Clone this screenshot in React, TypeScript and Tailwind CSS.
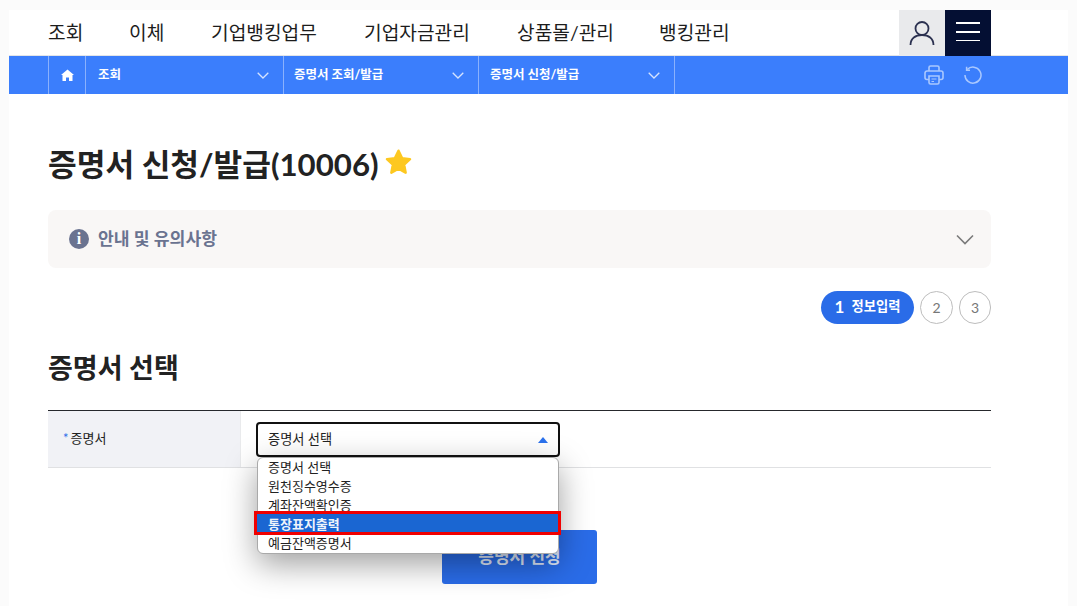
import React from "react";

const NAV = [
  { label: "조회", width: "w-[81px]" },
  { label: "이체", width: "w-[82px]" },
  { label: "기업뱅킹업무", width: "w-[153px]" },
  { label: "기업자금관리", width: "w-[153px]" },
  { label: "상품몰/관리", width: "w-[142px]" },
  { label: "뱅킹관리", width: "w-[100px]" },
];

const CRUMBS = [
  { label: "조회", width: "w-[198px] pl-[12px]" },
  { label: "증명서 조회/발급", width: "w-[195px] pl-[10px]" },
  { label: "증명서 신청/발급", width: "w-[196px] pl-[11px]" },
];
const OPTIONS = ["증명서 선택", "원천징수영수증", "계좌잔액확인증", "통장표지출력", "예금잔액증명서"];

const App: React.FC = () => {
  return (
    <div className="h-[606px] overflow-hidden bg-[#fbfbfb] pl-[9px] pr-[9px] pt-[10px] font-['Lato','Noto_Sans_CJK_KR',sans-serif] text-[#1f1f1f]">
      <div className="h-[596px] bg-white">
        {/* top menu */}
        <header className="flex h-[46px] items-center justify-between border-b border-[#e3e5e8] pl-[39px] pr-[77px]">
          <nav className="flex text-[19.2px] leading-[40px] text-[#1c1c1c]">
            {NAV.map((item) => (
              <a key={item.label} className={item.width}>
                {item.label}
              </a>
            ))}
          </nav>
          <div className="flex h-[46px]">
            <button className="flex w-[46px] items-center justify-center bg-[#e9eaec]">
              <svg width="26" height="26" viewBox="0 0 26 26" fill="none" stroke="#2b3150" strokeWidth="1.800">
                <circle cx="13" cy="8.500" r="6.500" />
                <path d="M1.500 25c0-6.500 5-10 11.500-10s11.500 3.500 11.500 10" />
              </svg>
            </button>
            <button className="flex w-[46px] flex-col items-center justify-center gap-[7px] bg-[#040f33] pb-[3px]">
              <span className="h-[2px] w-[24px] bg-white" />
              <span className="h-[2px] w-[24px] bg-white" />
              <span className="h-[1px] w-[24px] bg-white" />
            </button>
          </div>
        </header>

        {/* breadcrumb bar */}
        <div className="flex h-[38px] items-center justify-between bg-[#3b7efc] pl-[39px] pr-[86px]">
          <div className="flex h-full border-l border-[#8ab1fd]">
            <div className="flex w-[37px] items-center justify-center border-r border-[#8ab1fd]">
              <svg width="13" height="12" viewBox="0 0 13 12" fill="white">
                <path d="M6.500 0.500 13 6H11.500V12H8V8.500H5V12H1.500V6H0Z" />
              </svg>
            </div>
            {CRUMBS.map((crumb) => (
              <div
                key={crumb.label}
                className={`flex items-center justify-between border-r border-[#8ab1fd] pr-[14px] text-[12.500px] font-bold text-white ${crumb.width}`}
              >
                <span>{crumb.label}</span>
                <svg width="12" height="7" viewBox="0 0 12 7" fill="none" stroke="#d5e3fe" strokeWidth="1.300">
                  <path d="M0.700 0.700 6 6l5.300-5.300" />
                </svg>
              </div>
            ))}
          </div>
          <div className="flex items-center gap-[20px] text-[#aac8fe]">
            <svg width="20" height="20" viewBox="0 0 20 20" fill="none" stroke="currentColor" strokeWidth="1.600">
              <path d="M5 6V2.500C5 1.700 5.700 1 6.500 1h7c.8 0 1.500.7 1.500 1.500V6" />
              <path d="M5 14.500H3C1.900 14.500 1 13.600 1 12.500V8c0-1.100.9-2 2-2h14c1.100 0 2 .9 2 2v4.500c0 1.100-.9 2-2 2h-2" />
              <path d="M5 11h10v6.500c0 .8-.7 1.500-1.500 1.500h-7C5.700 19 5 18.300 5 17.500Z" />
              <path d="M7.500 14h5M7.500 16.500h2.500" strokeWidth="1.200" />
            </svg>
            <svg width="18" height="18" viewBox="0 0 18 18" fill="none" stroke="currentColor" strokeWidth="1.500">
              <path d="M3.200 3.600A8 8 0 1 1 1 9" />
              <path d="M2.600 0.800V4.200H6" />
            </svg>
          </div>
        </div>

        <main className="pl-[39px] pr-[77px]">
          <div className="mt-[50px] flex h-[40px] items-center gap-[4px]">
            <h1 className="text-[31.200px] font-bold leading-[40px] text-[#222]">증명서 신청/발급(10006)</h1>
            <svg className="-mt-[4px]" width="31" height="30" viewBox="0 0 24 24" fill="#fdc820" stroke="#fdc820" strokeWidth="2" strokeLinejoin="round">
              <path d="M12 3l2.800 5.900 6.400.8-4.700 4.400 1.200 6.400L12 17.400 6.300 20.500l1.200-6.400L2.800 9.700l6.400-.8Z" />
            </svg>
          </div>

          <div className="mt-[26px] flex h-[58px] items-center justify-between rounded-[8px] bg-[#f9f7f6] pl-[21px] pr-[17px]">
            <div className="flex items-center gap-[9px]">
              <span className="flex h-[20px] w-[20px] items-center justify-center rounded-full bg-[#6a7390] font-['Liberation_Serif',serif] text-[16px] font-bold text-white">
                i
              </span>
              <span className="text-[17.200px] font-bold text-[#6a7390]">안내 및 유의사항</span>
            </div>
            <svg width="18" height="11" viewBox="0 0 18 11" fill="none" stroke="#7a7a7a" strokeWidth="1.600">
              <path d="M1 1.500l8 8 8-8" />
            </svg>
          </div>

          <div className="mt-[23px] flex justify-end">
            <div className="flex h-[33px] w-[93px] items-center justify-center gap-[7px] rounded-full bg-[#2a6ce8] pb-[1px] text-white">
              <span className="text-[17px] font-bold">1</span>
              <span className="text-[13.300px] font-bold">정보입력</span>
            </div>
            <div className="ml-[6px] flex h-[33px] w-[33px] items-center justify-center rounded-full border border-[#bdbdbd] text-[14px] text-[#777]">
              2
            </div>
            <div className="ml-[6px] flex h-[33px] w-[32px] items-center justify-center rounded-full border border-[#bdbdbd] text-[14px] text-[#777]">
              3
            </div>
          </div>

          <h2 className="mt-[24px] text-[27px] font-bold leading-[40px] text-[#222]">증명서 선택</h2>

          <div className="mt-[22px] flex h-[58px] border-b border-t border-b-[#e0e1e3] border-t-[#26282c]">
            <div className="flex w-[193px] items-center border-r border-[#e9eaec] bg-[#f1f2f6] pl-[15px] text-[13px] text-[#222]">
              <span className="mr-[2px] text-[#2a6ce8]">*</span>증명서
            </div>
            <div className="relative pl-[15px] pt-[11px]">
              <div className="flex h-[35px] w-[304px] items-center justify-between rounded-[4px] border-2 border-[#111] bg-white pl-[10px] pr-[10px] text-[13.200px] text-[#222]">
                <span className="pt-[1px]">증명서 선택</span>
                <svg width="10" height="6" viewBox="0 0 10 6" fill="#2b72ee">
                  <path d="M5 0 10 6H0Z" />
                </svg>
              </div>
              {/* open select list */}
              <div className="absolute left-[16px] top-[46px] z-10 w-[302px] rounded-[6px] border border-[#a9a9a9] bg-white shadow-[0_10px_32px_rgba(0,0,0,0.38)]">
                {OPTIONS.map((option, i) => (
                  <div key={option} className="relative h-[19px] pl-[10px] text-[13px] leading-[18px] text-[#222]">
                    {i === 3 && (
                      <span className="absolute left-[-4px] top-[-4px] h-[24px] w-[307px] border-[3px] border-[#f00000] bg-[#1a66d2]" />
                    )}
                    <span className={i === 3 ? "relative font-bold text-[#eef3fb]" : ""}>{option}</span>
                  </div>
                ))}
              </div>
            </div>
          </div>

          <div className="mt-[62px] flex justify-center">
            <button className="h-[54px] w-[155px] rounded-[3px] bg-[#2a6ce8] text-[17px] font-bold text-[#dfe9fb]">
              증명서 신청
            </button>
          </div>
        </main>
      </div>
    </div>
  );
};

export default App;
